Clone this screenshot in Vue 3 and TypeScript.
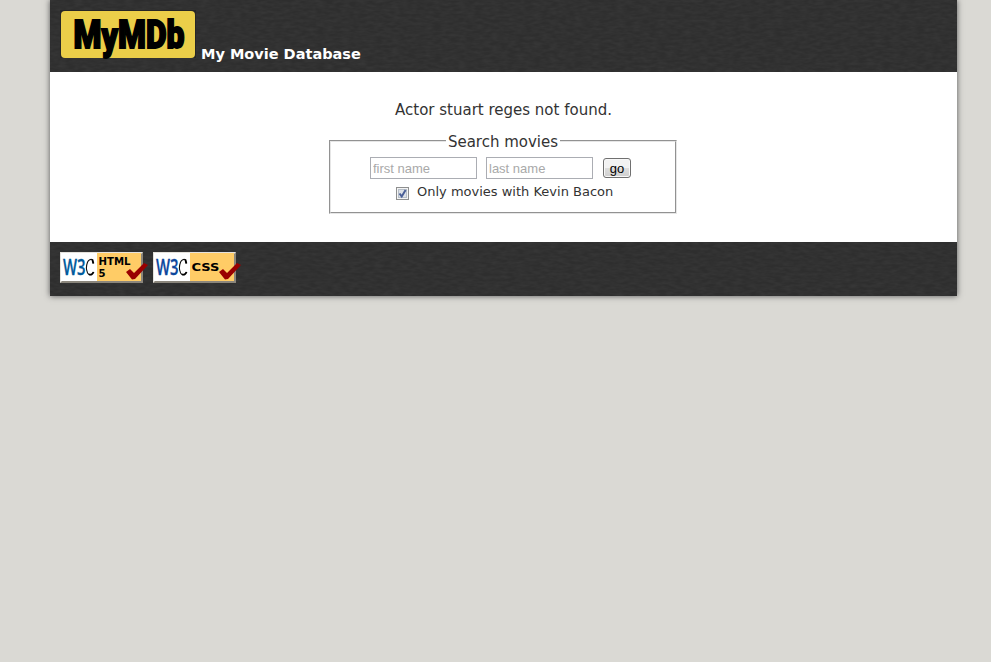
<script setup lang="ts">
import { ref } from 'vue'

interface Badge {
  id: string
  lines: string[]
  size: number
  width: number[]
  top: number
  blue: string
}

const firstName = ref('')
const lastName = ref('')
const baconOnly = ref(true)
const message = ref('Actor stuart reges not found.')

const badges: Badge[] = [
  { id: 'html', lines: ['HTML', '5'], size: 10, width: [32, 7], top: 13, blue: '#005a9c' },
  { id: 'css', lines: ['CSS'], size: 10, width: [28], top: 18.5, blue: '#0c479d' },
]
</script>

<template>
  <div class="page">
    <div class="frame">
      <header class="banner">
        <svg class="texture" aria-hidden="true">
          <filter id="grain-top" x="0" y="0" width="100%" height="100%">
            <feTurbulence type="fractalNoise" baseFrequency="0.12 0.35" numOctaves="2" seed="4" />
            <feColorMatrix values="0 0 0 0 1  0 0 0 0 1  0 0 0 0 1  0.07 0 0 0 -0.02" />
          </filter>
          <rect width="100%" height="100%" filter="url(#grain-top)" />
        </svg>
        <svg class="logo" width="136" height="50" viewBox="0 0 136 50" role="img" aria-label="MyMDb">
          <path d="M0 0H136V48H0Z" fill="#262626" />
          <rect x="1" y="1" width="134" height="47" rx="4" fill="#ebce49" />
          <text class="wordmark" x="13.5" y="38.3" textLength="111" lengthAdjust="spacingAndGlyphs">M<tspan dy="2">y</tspan><tspan dy="-2">MDb</tspan></text>
        </svg>
        <span class="title">My Movie Database</span>
      </header>

      <main class="content">
        <p class="message">{{ message }}</p>
        <form @submit.prevent>
          <fieldset>
            <legend>Search movies</legend>
            <div class="fields">
              <input v-model="firstName" class="name" type="text" placeholder="first name">
              <input v-model="lastName" class="name" type="text" placeholder="last name">
              <button type="submit">go</button>
            </div>
            <label class="option">
              <input v-model="baconOnly" type="checkbox" class="native">
              <svg class="box" width="13" height="13" viewBox="0 0 13 13" aria-hidden="true">
                <rect x=".5" y=".5" width="12" height="12" fill="#f4f4f4" stroke="#8e8f8f" />
                <rect x="2.5" y="2.5" width="8" height="8" fill="#dde1e6" stroke="#b7bfc9" />
                <path v-if="baconOnly" d="M3.5 6.5L5.7 9.4L9.6 3" fill="none" stroke="#4a5f97" stroke-width="2" />
              </svg>
              <span>Only movies with Kevin Bacon</span>
            </label>
          </fieldset>
        </form>
      </main>

      <footer class="banner foot">
        <svg class="texture" aria-hidden="true">
          <filter id="grain-foot" x="0" y="0" width="100%" height="100%">
            <feTurbulence type="fractalNoise" baseFrequency="0.12 0.35" numOctaves="2" seed="7" />
            <feColorMatrix values="0 0 0 0 1  0 0 0 0 1  0 0 0 0 1  0.07 0 0 0 -0.02" />
          </filter>
          <rect width="100%" height="100%" filter="url(#grain-foot)" />
        </svg>
        <svg v-for="badge in badges" :key="badge.id" class="badge" width="88" height="31" viewBox="0 0 88 31">
          <rect width="83" height="31" fill="#8b867c" />
          <path d="M0 31V0H83L81 2V29H2Z" fill="#e5e2dc" />
          <rect x="1" y="1" width="36" height="28" fill="#fff" />
          <rect x="37" y="1" width="44" height="28" fill="#fc6" />
          <text
            class="w3"
            x="3"
            y="22.5"
            textLength="22.5"
            lengthAdjust="spacingAndGlyphs"
            :fill="badge.blue"
            :stroke="badge.blue"
          >W3</text>
          <path d="M33.2 11.5L32.5 7.8C30.8 6.8 28.6 7.8 27.6 10C26.2 13.5 26.2 18 27.6 21C28.8 23.4 31.5 23.4 33.5 20" fill="none" stroke="#111" stroke-width="1.1" />
          <path d="M32.3 7.5L33.4 11.4M29 22.2Q32 23.8 33.6 20" fill="none" stroke="#000" stroke-width="1.8" />
          <text
            v-for="(line, i) in badge.lines"
            :key="line"
            class="caption"
            x="38.5"
            :y="badge.top + i * 12"
            :font-size="badge.size"
            :textLength="badge.width[i]"
            lengthAdjust="spacingAndGlyphs"
          >{{ line }}</text>
          <path d="M66 20L70 17L74 21L84 11L88 13L75 27L72 27.5Z" fill="#900" />
        </svg>
      </footer>
    </div>
  </div>
</template>

<style>
body {
  background: #dad9d4;
}
</style>

<style scoped>
.page {
  min-height: 100vh;
}
.frame {
  width: 907px;
  margin-left: 50px;
  background: #fff;
  color: #333;
  font-family: Verdana, "DejaVu Sans", sans-serif;
  box-shadow: 0 0 6px #555;
}
.banner {
  position: relative;
  display: flex;
  box-sizing: border-box;
  height: 72px;
  padding: 10px 10px 0;
  background: #2e2e2e;
}
.texture {
  position: absolute;
  inset: 0;
  width: 100%;
  height: 100%;
}
.logo {
  position: relative;
  flex: none;
  overflow: visible;
}
.wordmark {
  font: 900 39px Roboto, sans-serif;
  stroke: #000;
  stroke-width: 1.8px;
}
.title {
  position: relative;
  margin: 34px 0 0 5px;
  color: #fff;
  font-size: 14.5px;
  font-weight: bold;
  line-height: 20px;
}
.content {
  display: flex;
  flex-direction: column;
  align-items: center;
  box-sizing: border-box;
  height: 170px;
  padding-top: 28px;
}
.message {
  margin: 0 0 10px;
  font-size: 15px;
  line-height: 20px;
}
fieldset {
  box-sizing: border-box;
  width: 348px;
  height: 84px;
  margin: 0 1px 0 0;
  padding: 5px 0 0;
  border: 2px groove #e6e6e6;
}
legend {
  margin: 0 auto;
  padding: 2px 2px 0;
  font-size: 15px;
  line-height: 20px;
}
.fields {
  display: flex;
  align-items: center;
  padding-left: 39px;
}
.name {
  box-sizing: border-box;
  width: 107px;
  height: 22px;
  margin: 0 9px 0 0;
  padding: 1px 2px;
  border: 1px solid #abadb3;
  font: 13px "Liberation Sans", Arial, sans-serif;
}
.name::placeholder {
  color: #a9a9a9;
}
button {
  box-sizing: border-box;
  width: 28px;
  height: 20px;
  margin-left: 1px;
  padding: 0;
  border: 1px solid #707070;
  border-radius: 3px;
  background: linear-gradient(#f2f2f2 0 48%, #dddddd 52%, #cfcfcf);
  box-shadow: inset 0 0 0 1px #f8f8f8;
  color: #000;
  font: 13px "Liberation Sans", Arial, sans-serif;
}
.option {
  display: flex;
  margin-top: 4px;
  padding-left: 65px;
  font-size: 13px;
  line-height: 17px;
}
.native {
  position: absolute;
  opacity: 0;
}
.box {
  margin: 4px 8px 0 0;
}
.foot {
  height: 54px;
  gap: 5px;
}
.badge {
  position: relative;
  flex: none;
}
.w3 {
  font: 600 21px "Open Sans", sans-serif;
  stroke-width: 0.3px;
}
.caption {
  font-family: "DejaVu Sans", sans-serif;
  font-weight: bold;
}
</style>
